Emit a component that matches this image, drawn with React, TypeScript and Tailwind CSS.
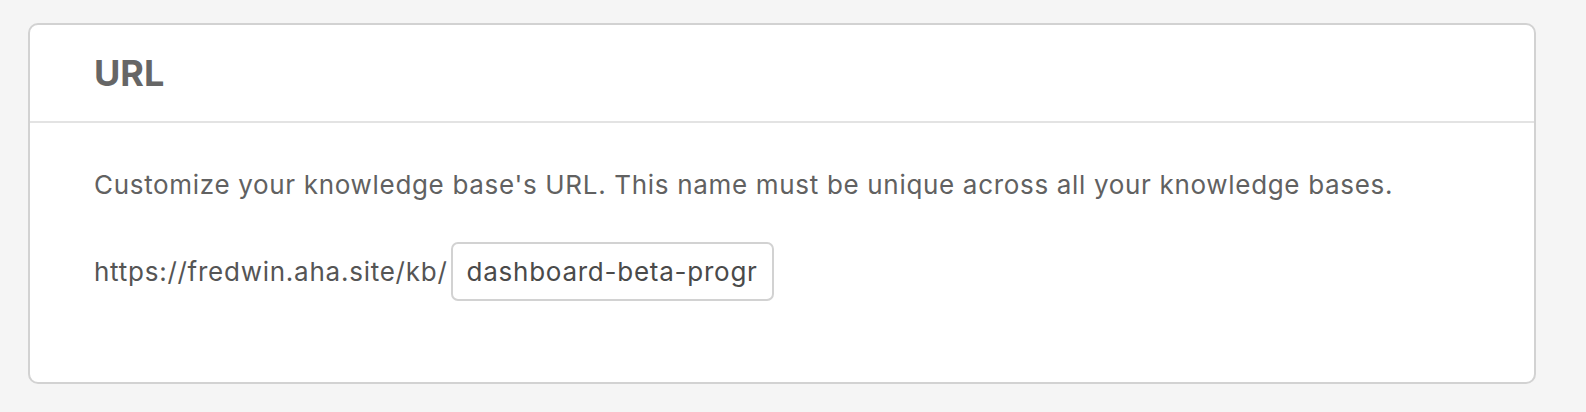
export default function App() {
  return (
    <div
      className="w-full h-[412px] bg-[#f5f5f5] pt-[23px] pl-[28px]"
      style={{ fontFamily: 'Inter, "Noto Sans", sans-serif' }}
    >
      <div className="w-[1508px] h-[361px] bg-white border-2 border-[#d2d2d2] rounded-[10px] overflow-hidden">
        <div className="h-[98px] flex items-center pl-[64px] border-b-2 border-[#e3e3e3]">
          <h2 className="text-[36px] font-bold text-[#666666] leading-none">URL</h2>
        </div>
        <div className="pl-[64px] pt-[44px]">
          <p className="text-[26px] tracking-[0.68px] leading-[36px] text-[#616161]">
            Customize your knowledge base's URL. This name must be unique across all your knowledge bases.
          </p>
          <div className="mt-[39px] flex items-center">
            <span className="text-[26px] tracking-[0.75px] text-[#555555]">https://fredwin.aha.site/kb/</span>
            <input
              readOnly
              value="dashboard-beta-program"
              className="ml-[3px] w-[323px] h-[59px] px-[14px] border-2 border-[#d2d2d2] rounded-[7px] text-[26px] tracking-[0.75px] text-[#4a4a4a] bg-white outline-none"
              style={{ fontFamily: 'Inter, "Noto Sans", sans-serif' }}
            />
          </div>
        </div>
      </div>
    </div>
  );
}
